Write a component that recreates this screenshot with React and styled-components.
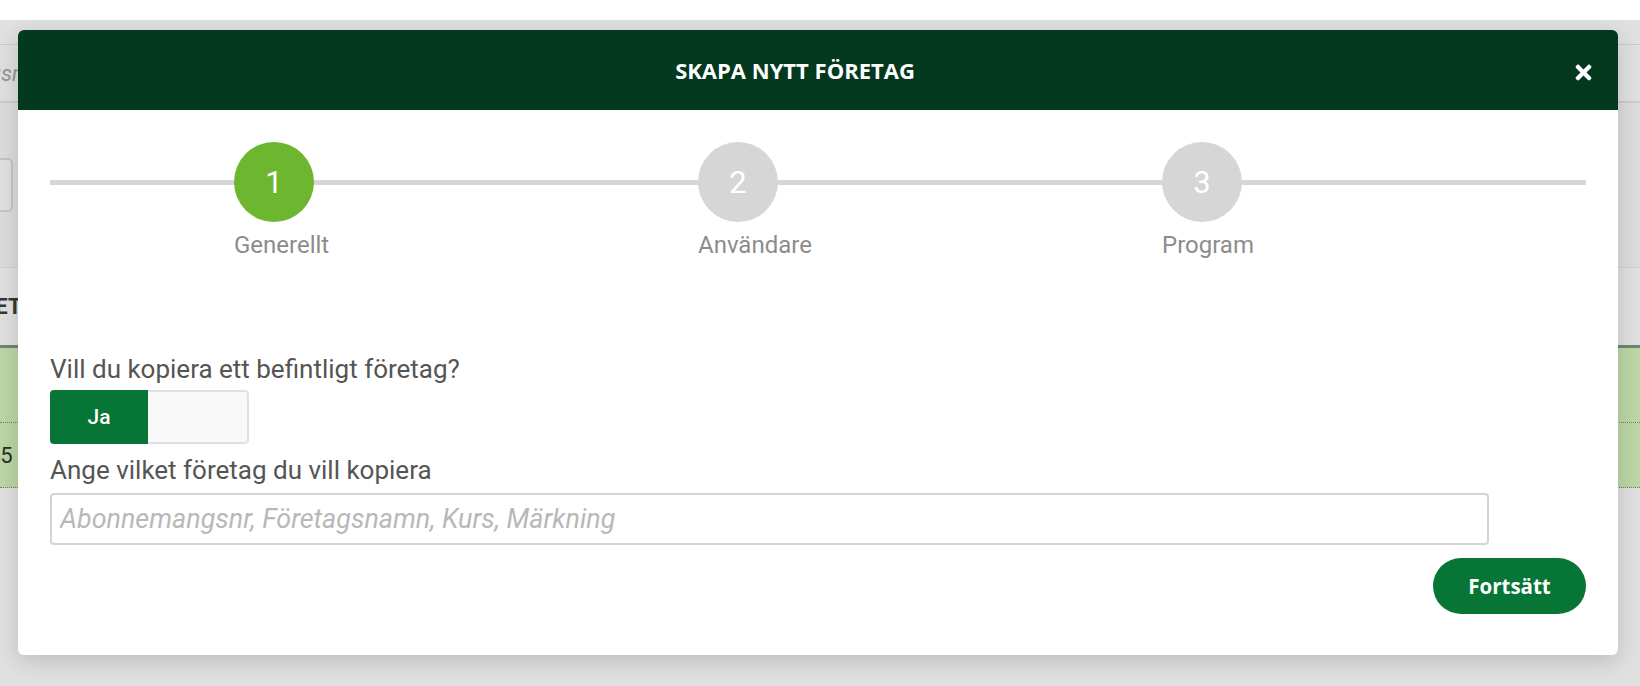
import React from 'react'
import styled, { createGlobalStyle } from 'styled-components'
import { FaTimes } from 'react-icons/fa'

const GlobalStyle = createGlobalStyle`
  html, body {
    margin: 0;
    padding: 0;
    background: #fff;
    font-family: Roboto, "Liberation Sans", Arial, sans-serif;
  }
  * {
    box-sizing: border-box;
  }
`

const colors = {
  header: '#02391f',
  brand: '#077535',
  stepActive: '#6cb72f',
  stepIdle: '#d6d6d6',
  text: '#555555',
  muted: '#8c8c8c',
}

const Screen = styled.div`
  position: relative;
  width: 1640px;
  height: 686px;
  overflow: hidden;
  background: #fff;
`

/* the page that lies under the dialog */
const BgPage = styled.div`
  padding-top: 20px;
  display: flex;
  flex-direction: column;
`

const BgTopBar = styled.div`
  height: 25px;
  border-bottom: 1px solid #e4e4e4;
`

const BgSearchRow = styled.div`
  height: 58px;
  display: flex;
  align-items: center;
  border-bottom: 2px solid #e8e8e8;
`

const BgPlaceholder = styled.span`
  margin-left: -126px;
  font-size: 22px;
  font-style: italic;
  color: #a9a9a9;
  white-space: nowrap;
`

const BgFilterRow = styled.div`
  height: 165px;
  display: flex;
  align-items: center;
  border-bottom: 1px solid #eeeeee;
  background: #fbfbfb;
`

const BgFilterBox = styled.div`
  width: 60px;
  height: 54px;
  margin-left: -47px;
  border: 2px solid #e0e0e0;
  border-radius: 5px;
  background: #fff;
`

const BgTableHead = styled.div`
  height: 80px;
  display: flex;
  align-items: center;
  border-bottom: 3px solid #849684;
  font-size: 22px;
  font-weight: 700;
  color: #38443a;
  white-space: nowrap;
`

const BgCell = styled.span`
  margin-left: ${p => p.$shift}px;
`

const BgRow = styled.div`
  height: ${p => p.$height}px;
  display: flex;
  align-items: center;
  background: #d7f4bc;
  border-bottom: 1px dotted #8a8a8a;
  font-size: 22px;
  color: #333;
  white-space: nowrap;
`

const Overlay = styled.div`
  position: absolute;
  top: 20px;
  left: 0;
  right: 0;
  bottom: 0;
  background: rgba(0, 0, 0, 0.12);
`

/* dialog */
const Modal = styled.div`
  position: absolute;
  top: 30px;
  left: 18px;
  width: 1600px;
  background: #fff;
  border-radius: 6px;
  overflow: hidden;
  box-shadow: 0 6px 22px rgba(0, 0, 0, 0.16);
`

const ModalHeader = styled.div`
  height: 80px;
  display: flex;
  align-items: center;
  padding: 0 27px 0 32px;
  background: ${colors.header};
`

const ModalTitle = styled.h1`
  flex: 1;
  margin: 0;
  text-align: center;
  font-family: "Open Sans", "Noto Sans", sans-serif;
  font-size: 22px;
  font-weight: 700;
  color: #fff;
`

const CloseButton = styled.button`
  width: 51px;
  padding: 4px 0 0;
  display: flex;
  justify-content: flex-end;
  border: 0;
  background: none;
  color: #fff;
  cursor: pointer;

  svg {
    margin-right: -4px;
  }
`

const ModalBody = styled.div`
  padding: 32px 32px 41px;
`

const Stepper = styled.div`
  position: relative;
  display: grid;
  grid-template-columns: repeat(3, 464px);
  padding-left: 184px;

  &::before {
    content: '';
    position: absolute;
    left: 0;
    right: 0;
    top: 38px;
    height: 5px;
    background: ${colors.stepIdle};
  }
`

const Step = styled.div`
  display: flex;
  flex-direction: column;
  align-items: flex-start;
`

const StepCircle = styled.div`
  position: relative;
  width: 80px;
  height: 80px;
  border-radius: 50%;
  display: flex;
  align-items: center;
  justify-content: center;
  background: ${p => (p.$active ? colors.stepActive : colors.stepIdle)};
  color: #fff;
  font-size: 31px;
`

const StepLabel = styled.div`
  margin-top: 9px;
  font-size: 24px;
  line-height: 28px;
  color: ${colors.muted};
`

const FieldLabel = styled.div`
  margin-top: ${p => p.$gap}px;
  font-size: 26px;
  line-height: 30px;
  color: ${colors.text};
`

const Toggle = styled.div`
  margin-top: 6px;
  width: 199px;
  height: 54px;
  display: flex;
  border-radius: 4px;
  overflow: hidden;
`

const ToggleOption = styled.button`
  flex: ${p => (p.$active ? '0 0 98px' : '1')};
  padding: 0;
  border: ${p => (p.$active ? '0' : '2px solid #e0e0e0')};
  border-left: 0;
  border-radius: ${p => (p.$active ? '0' : '0 4px 4px 0')};
  background: ${p => (p.$active ? colors.brand : '#f9f9f9')};
  color: #fff;
  font-family: Roboto, sans-serif;
  font-size: 21px;
  font-weight: 500;
`

const SearchInput = styled.input`
  display: block;
  margin-top: 8px;
  width: 1439px;
  height: 52px;
  padding: 0 8px;
  border: 2px solid #d4d4d4;
  border-radius: 4px;
  font-family: Roboto, sans-serif;
  font-size: 26.9px;
  color: ${colors.text};
  outline: none;

  &::placeholder {
    font-style: italic;
    color: #b8b8b8;
  }
`

const Footer = styled.div`
  margin-top: 13px;
  display: flex;
  justify-content: flex-end;
`

const PrimaryButton = styled.button`
  width: 153px;
  height: 56px;
  border: 0;
  border-radius: 28px;
  background: ${colors.brand};
  color: #fff;
  font-family: "Open Sans", "Noto Sans", sans-serif;
  font-size: 20.5px;
  font-weight: 700;
  cursor: pointer;
`

const steps = [
  { n: 1, label: 'Generellt' },
  { n: 2, label: 'Användare' },
  { n: 3, label: 'Program' },
]

export default function App() {
  const current = 1
  return (
    <Screen>
      <GlobalStyle />
      <BgPage>
        <BgTopBar />
        <BgSearchRow>
          <BgPlaceholder>Abonnemangsnr</BgPlaceholder>
        </BgSearchRow>
        <BgFilterRow>
          <BgFilterBox />
        </BgFilterRow>
        <BgTableHead>
          <BgCell $shift={-46}>FÖRETAG</BgCell>
        </BgTableHead>
        <BgRow $height={75} />
        <BgRow $height={65}>
          <BgCell $shift={-12}>45</BgCell>
        </BgRow>
      </BgPage>
      <Overlay />

      <Modal>
        <ModalHeader>
          <ModalTitle>SKAPA NYTT FÖRETAG</ModalTitle>
          <CloseButton aria-label="Stäng">
            <FaTimes size={23} />
          </CloseButton>
        </ModalHeader>
        <ModalBody>
          <Stepper>
            {steps.map(s => (
              <Step key={s.n}>
                <StepCircle $active={s.n === current}>{s.n}</StepCircle>
                <StepLabel>{s.label}</StepLabel>
              </Step>
            ))}
          </Stepper>

          <FieldLabel $gap={95}>Vill du kopiera ett befintligt företag?</FieldLabel>
          <Toggle>
            <ToggleOption $active>Ja</ToggleOption>
            <ToggleOption />
          </Toggle>

          <FieldLabel $gap={11}>Ange vilket företag du vill kopiera</FieldLabel>
          <SearchInput placeholder="Abonnemangsnr, Företagsnamn, Kurs, Märkning" />

          <Footer>
            <PrimaryButton>Fortsätt</PrimaryButton>
          </Footer>
        </ModalBody>
      </Modal>
    </Screen>
  )
}
